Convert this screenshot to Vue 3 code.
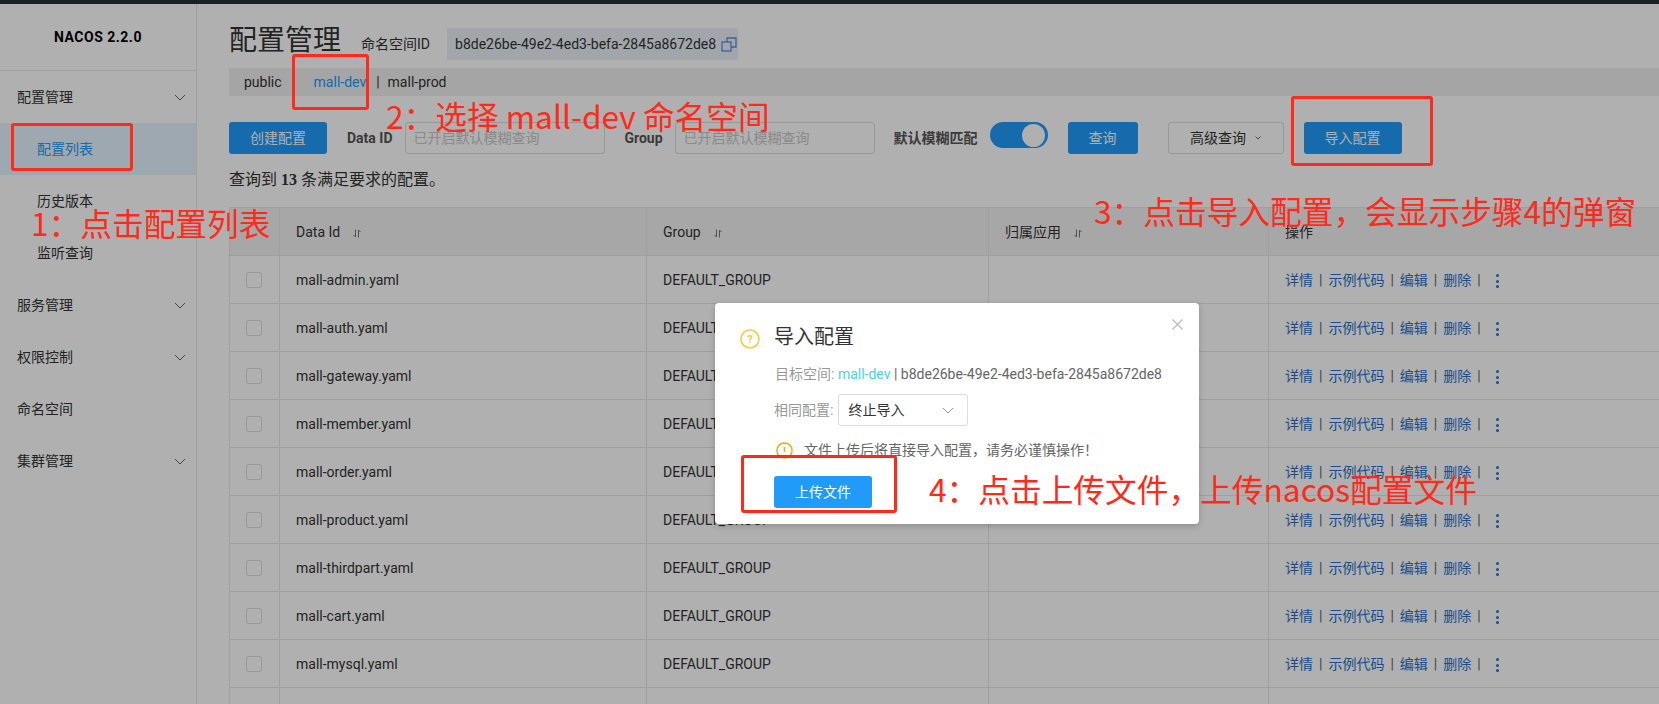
<script setup>
const files = ['mall-admin', 'mall-auth', 'mall-gateway', 'mall-member', 'mall-order', 'mall-product', 'mall-thirdpart', 'mall-cart', 'mall-mysql', 'mall-search']
const menu = [
  { label: '配置管理', arrow: true },
  { label: '配置列表', sub: true, active: true },
  { label: '历史版本', sub: true },
  { label: '监听查询', sub: true },
  { label: '服务管理', arrow: true },
  { label: '权限控制', arrow: true },
  { label: '命名空间' },
  { label: '集群管理', arrow: true }
]
const columns = [
  { label: 'Data Id', sort: true },
  { label: 'Group', sort: true },
  { label: '归属应用', sort: true },
  { label: '操作' }
]
const ops = ['详情', '示例代码', '编辑', '删除']
</script>

<template>
  <div class="page">
    <div class="topbar"></div>
    <div class="body">
      <aside class="sidebar">
        <div class="logo">NACOS 2.2.0</div>
        <ul class="menu">
          <li v-for="m in menu" :key="m.label" class="menu-item" :class="{ sub: m.sub, active: m.active }">
            <span>{{ m.label }}</span>
            <svg v-if="m.arrow" class="chev" width="12" height="7" viewBox="0 0 12 7"><polyline points="1,1 6,6 11,1" fill="none" stroke="#666" stroke-width="1" /></svg>
          </li>
        </ul>
      </aside>
      <main class="main">
        <div class="head">
          <h1 class="title">配置管理</h1>
          <span class="ns-label">命名空间ID</span>
          <div class="chip">
            <span>b8de26be-49e2-4ed3-befa-2845a8672de8</span>
            <svg class="copy" width="16" height="15" viewBox="0 0 16 15" fill="none" stroke="#5b8de0" stroke-width="1.3"><rect x="1" y="5" width="9" height="9" /><polyline points="6,5 6,1 15,1 15,10 10,10" /></svg>
          </div>
        </div>
        <div class="tabs">
          <span>public</span>
          <span class="sep tab-sep"></span>
          <span class="tab-on">mall-dev</span>
          <span class="sep">|</span>
          <span>mall-prod</span>
        </div>
        <div class="toolbar">
          <button class="btn primary w98">创建配置</button>
          <label class="lbl">Data ID</label>
          <input class="field" placeholder="已开启默认模糊查询" />
          <label class="lbl">Group</label>
          <input class="field" placeholder="已开启默认模糊查询" />
          <label class="lbl fuzzy">默认模糊匹配</label>
          <div class="toggle"><i></i></div>
          <button class="btn primary query">查询</button>
          <button class="btn advanced">高级查询
            <svg width="6" height="4" viewBox="0 0 6 4"><polyline points="0.5,0.5 3,3 5.5,0.5" fill="none" stroke="#666" /></svg>
          </button>
          <button class="btn primary w98 import">导入配置</button>
        </div>
        <p class="result">查询到 <b>13</b> 条满足要求的配置。</p>
        <div class="table">
          <div class="row header">
            <div class="cell check"></div>
            <div v-for="c in columns" :key="c.label" class="cell">
              <span>{{ c.label }}</span>
              <svg v-if="c.sort" class="sort" width="8" height="9" viewBox="0 0 8 9" fill="none" stroke="#777"><path d="M2.5 0.5V8L0.5 6M5.5 8.5V1L7.5 3" /></svg>
            </div>
          </div>
          <div v-for="f in files" :key="f" class="row">
            <div class="cell check"><i class="box"></i></div>
            <div class="cell">{{ f }}.yaml</div>
            <div class="cell">DEFAULT_GROUP</div>
            <div class="cell"></div>
            <div class="cell actions">
              <template v-for="o in ops" :key="o">
                <a>{{ o }}</a><span class="bar">|</span>
              </template>
              <span class="dots"><i></i><i></i><i></i></span>
            </div>
          </div>
        </div>
      </main>
    </div>

    <div class="mask"></div>

    <section class="dialog">
      <button class="close" aria-label="close">
        <svg width="11" height="11" viewBox="0 0 11 11"><path d="M0.5 0.5L10.5 10.5M10.5 0.5L0.5 10.5" stroke="#bbb" stroke-width="1.2" /></svg>
      </button>
      <div class="dlg-head">
        <svg class="help" width="20" height="20" viewBox="0 0 20 20"><circle cx="10" cy="10" r="9" fill="none" stroke="#f6c944" stroke-width="1.6" /><text x="10" y="14" text-anchor="middle" font-size="11" font-weight="700" fill="#f6c944" font-family="Roboto, sans-serif">?</text></svg>
        <h2>导入配置</h2>
      </div>
      <div class="target"><span class="muted">目标空间:</span> <span class="cyan">mall-dev</span> | b8de26be-49e2-4ed3-befa-2845a8672de8</div>
      <div class="same">
        <span class="muted">相同配置:</span>
        <div class="select">
          <span>终止导入</span>
          <svg width="12" height="7" viewBox="0 0 12 7"><polyline points="1,1 6,6 11,1" fill="none" stroke="#999" stroke-width="1" /></svg>
        </div>
      </div>
      <div class="warn">
        <svg width="17" height="17" viewBox="0 0 17 17"><circle cx="8.5" cy="8.5" r="7.6" fill="none" stroke="#f5a623" stroke-width="1.5" /><path d="M8.5 5V10" stroke="#f5a623" stroke-width="1.6" /></svg>
        <span>文件上传后将直接导入配置，请务必谨慎操作！</span>
      </div>
      <button class="btn upload">上传文件</button>
    </section>

    <div class="mark m1"></div>
    <div class="mark m2"></div>
    <div class="mark m3"></div>
    <div class="mark m4"></div>
    <div class="note n1">1：点击配置列表</div>
    <div class="note n2">2：选择 mall-dev 命名空间</div>
    <div class="note n3">3：点击导入配置，会显示步骤4的弹窗</div>
    <div class="note n4">4：点击上传文件，上传nacos配置文件</div>
  </div>
</template>

<style>
html, body { margin: 0; overflow: hidden; background: #fff; }
</style>

<style scoped>
* { box-sizing: border-box; }
.page {
  position: relative;
  width: 1659px;
  height: 704px;
  overflow: hidden;
  background: #fff;
  color: #333;
  font: 14px/20px Roboto, "Noto Sans CJK SC", sans-serif;
}
.topbar { height: 4px; background: #282d37; }
.body { display: flex; height: 700px; }

.sidebar { flex: 0 0 197px; border-right: 1px solid #e6e6e6; }
.logo {
  height: 67px;
  border-bottom: 1px solid #e6e6e6;
  font-weight: 700;
  font-size: 14px;
  letter-spacing: 0.5px;
  line-height: 66px;
  text-align: center;
  color: #000;
}
.menu { list-style: none; margin: 0; padding: 0; }
.menu-item {
  display: flex;
  align-items: center;
  justify-content: space-between;
  height: 52px;
  padding: 0 10px 0 17px;
}
.menu-item.sub { padding-left: 37px; }
.menu-item.active { background: #e4f3ff; color: #209bfa; }

.main { flex: 1; min-width: 0; padding: 24px 0 0 32px; }
.head { display: flex; align-items: flex-start; height: 32px; }
.title { margin: 0 20px 0 0; font-size: 28px; font-weight: 400; line-height: 26px; }
.ns-label { line-height: 32px; margin-right: 17px; }
.chip {
  display: flex;
  align-items: center;
  gap: 5px;
  width: 291px;
  height: 32px;
  padding-left: 8px;
  background: #ebf1f8;
}
.tabs {
  display: flex;
  align-items: center;
  height: 28px;
  margin-top: 8px;
  padding-left: 15px;
  background: #efefef;
}
.tab-on { color: #209bfa; }
.sep { margin: 0 8px 0 10px; }
.tab-sep { width: 1px; margin: 0 10px 0 21px; }

.toolbar { display: flex; align-items: flex-start; height: 32px; margin-top: 26px; }
.btn {
  height: 32px;
  padding: 0;
  border: 1px solid transparent;
  border-radius: 3px;
  font: inherit;
}
.primary { background: #209bfa; color: #fff; }
.w98 { width: 98px; }
.lbl { margin: 0 12px 0 20px; font-weight: 700; line-height: 32px; color: #555; }
.fuzzy { margin-left: 19px; }
.field {
  width: 200px;
  height: 32px;
  padding: 0 8px;
  border: 1px solid #ddd;
  border-radius: 3px;
  font: inherit;
  background: transparent;
}
.field::placeholder { color: #c8c8c8; opacity: 1; }
.toggle {
  display: flex;
  justify-content: flex-end;
  align-items: center;
  width: 58px;
  height: 26px;
  padding: 0 3px;
  border-radius: 13px;
  background: #209bfa;
}
.toggle i { width: 23px; height: 23px; border-radius: 50%; background: #fff; }
.query { width: 70px; margin-left: 20px; }
.advanced {
  display: flex;
  align-items: center;
  justify-content: center;
  gap: 9px;
  width: 116px;
  margin-left: 30px;
  border-color: #ddd;
  background: transparent;
  color: #333;
}
.import { margin-left: 20px; }
.result {
  height: 24px;
  margin: 14px 0 15px;
  font-size: 16px;
  line-height: 24px;
}
.result b { font-family: "Liberation Serif", serif; }

.table { border-left: 1px solid #e6e6e6; border-top: 1px solid #e6e6e6; }
.row {
  display: grid;
  grid-template-columns: 49px 367px 342px 280px 1fr;
  height: 48px;
  border-bottom: 1px solid #e6e6e6;
}
.header { background: #f2f2f2; }
.cell {
  display: flex;
  align-items: center;
  padding-left: 16px;
  border-left: 1px solid #e6e6e6;
}
.cell.check { padding-left: 16px; border-left: 0; }
.box { width: 16px; height: 16px; border: 1px solid #dcdcdc; border-radius: 3px; }
.sort { margin-left: 13px; margin-top: 3px; }
.actions { color: #2672c9; }
.bar { margin: 0 6px; color: #666; }
.dots { display: flex; flex-direction: column; gap: 2.5px; margin-left: 9px; margin-top: 3px; }
.dots i { width: 3px; height: 3px; border-radius: 50%; background: #2672c9; }

.mask { position: absolute; inset: 0; background: rgba(0, 0, 0, 0.31); }

.dialog {
  position: absolute;
  left: 715px;
  top: 303px;
  width: 484px;
  height: 221px;
  padding: 21px 0 0 25px;
  border-radius: 4px;
  background: #fff;
  box-shadow: 0 2px 6px rgba(0, 0, 0, 0.2);
}
.close { position: absolute; right: 16px; top: 16px; padding: 0; border: 0; background: none; line-height: 0; }
.dlg-head { display: flex; align-items: center; height: 26px; }
.dlg-head h2 { margin: 0 0 0 14px; font-size: 20px; font-weight: 400; line-height: 26px; }
.help { margin-top: 3px; }
.target { margin: 14px 0 0 35px; color: #666; }
.muted { color: #999; }
.cyan { color: #49d2e7; }
.same { display: flex; align-items: center; gap: 5px; margin: 10px 0 0 34px; }
.select {
  display: flex;
  align-items: center;
  justify-content: space-between;
  width: 130px;
  height: 32px;
  padding: 0 13px 0 9px;
  border: 1px solid #ddd;
  border-radius: 3px;
}
.warn { display: flex; align-items: center; gap: 11px; height: 20px; margin: 14px 0 0 36px; color: #666; }
.warn svg { flex: none; }
.upload {
  display: block;
  width: 98px;
  margin: 16px 0 0 34px;
  background: #209bfa;
  color: #fff;
}

.mark { position: absolute; border: 3px solid #ff2a1a; border-radius: 3px; }
.m1 { left: 11px; top: 123px; width: 122px; height: 48px; }
.m2 { left: 292px; top: 54px; width: 77px; height: 56px; }
.m3 { left: 1291px; top: 96px; width: 142px; height: 70px; }
.m4 { left: 741px; top: 455px; width: 156px; height: 58px; }
.note {
  position: absolute;
  color: #ff2a1a;
  font-size: 31.7px;
  line-height: 40px;
  white-space: nowrap;
  font-family: "Noto Sans CJK SC", sans-serif;
}
.n1 { left: 31px; top: 202px; }
.n2 { left: 386px; top: 95px; }
.n3 { left: 1094px; top: 190px; }
.n4 { left: 929px; top: 468px; }
</style>
